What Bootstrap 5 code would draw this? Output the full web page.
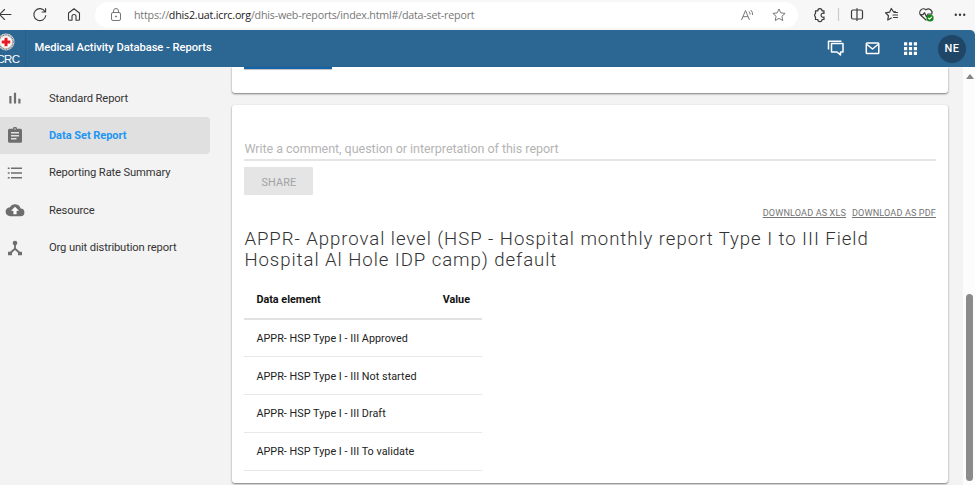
<!DOCTYPE html>
<html lang="en">
<head>
<meta charset="utf-8">
<meta name="viewport" content="width=device-width, initial-scale=1">
<title>Medical Activity Database - Reports</title>
<link href="https://cdn.jsdelivr.net/npm/bootstrap@5.3.0/dist/css/bootstrap.min.css" rel="stylesheet">
<style>
body{font-family:Roboto,sans-serif;font-size:11px;line-height:16px;color:#333;background:#f3f3f3;height:485px}
svg{display:block;flex:none}
.browser-bar{height:30px;background:#f7f7f7;color:#3b3b3b}
.nav-icons{width:95px;padding-left:0}
.address{width:703px;height:26px;margin-top:2px;background:#fff;border-radius:13px;padding:0 12px 0 15px;color:#777}
.url{font:10.7px/16px "Open Sans",sans-serif;color:#777;margin-left:12px;white-space:nowrap;letter-spacing:-.2px}
.url b{font-weight:400;color:#222}
.app-header{height:37px;background:#2c6693;color:#fff;border-radius:0 5px 0 0}
.brand{width:26px;height:37px}
.app-title{font-weight:500;font-size:11.2px;margin-left:8.5px;margin-bottom:2px;letter-spacing:-.04px}
.avatar{width:28px;height:28px;background:#1f4666;font-size:11px;font-weight:500;letter-spacing:.4px;margin-right:9px}
.workspace{height:418px}
.side{width:210px;padding-top:12.4px}
.side .side-link{height:37.4px;padding-left:7px;color:#333;font-size:11.2px;letter-spacing:-.13px;text-decoration:none;border-radius:0 4px 4px 0}
.side-link span{padding-top:1px}
.side-link svg{margin-right:26px;color:#6e6e6e}
.side .side-link.active{background:#e0e0e0;color:#2196f3;font-weight:700;font-size:11px;letter-spacing:-.03px}
.main-col{width:716px;margin-left:22px}
.panel{background:#fff;border-radius:0 0 3px 3px;box-shadow:0 1px 2px rgba(0,0,0,.5)}
.panel-top{height:26px;padding-left:12px}
.blue-edge{width:88px;height:1.5px;background:#1565a8;box-shadow:0 1px 1px rgba(0,0,0,.25)}
.panel-report{height:378px;margin-top:12px;padding:34px 12px 0 12.4px;border-radius:3px}
.comment{width:691.6px;height:22px;border-bottom:2px solid #e5e5e5;color:#b4b4b4;font-size:12.5px;line-height:19px;letter-spacing:-.03px}
.share{width:69px;height:28px;margin-top:6px;background:#e5e5e5;color:#a3a3a3;font-size:10.8px;line-height:29px;letter-spacing:.15px;border-radius:1px;border:0;padding:1px 0 0}
.downloads{height:16px;margin-top:10px;font-size:9.1px;letter-spacing:.13px;gap:6px}
.downloads a{color:#757575;text-underline-offset:1px}
.report-title{font-weight:300;font-size:18.6px;line-height:21px;letter-spacing:.94px;color:#333;margin:8px 0 0}
.data-grid{width:237.6px;margin:9px 0 0;font-size:10.8px;letter-spacing:.03px;color:#222;border-collapse:collapse}
.data-grid th{height:39px;padding:1px 12px 0;font-weight:700;color:#111;border-bottom:2px solid #e2e2e2;vertical-align:middle;font-size:10.8px;letter-spacing:0}
.data-grid td{height:37.8px;padding:2px 12px 0;border-bottom:1px solid #e8e8e8;vertical-align:middle}
.scroll-track{width:12px;background:#fcfcfc;padding:7px 0 4px 1px}
.scroll-thumb{width:7px;height:187px;border-radius:4px;background:#8b8b8b}
</style>
<script src="https://cdn.jsdelivr.net/npm/bootstrap@5.3.0/dist/js/bootstrap.bundle.min.js"></script>
</head>
<body class="overflow-hidden">
<div class="browser-bar d-flex align-items-start">
  <div class="nav-icons flex-shrink-0">
    <svg width="95" height="30" fill="none" stroke="currentColor" stroke-width="1.1" stroke-linecap="round" stroke-linejoin="round">
      <path d="M-2 14.500H11M4.500 9.500L-.5 14.500l5 5"/>
      <path d="M45 11.500a6 6 0 1 0 .8 4M45.600 8.500v3.500h-3.500"/>
      <path d="M68.500 13l5.500-4.300 5.500 4.300v6.200a1 1 0 0 1-1 1H76v-3.700a2 2 0 0 0-4 0v3.700h-2.500a1 1 0 0 1-1-1z"/>
    </svg>
  </div>
  <div class="address d-flex align-items-center flex-shrink-0">
    <svg width="12" height="14" fill="none" stroke="currentColor"><rect x="1.500" y="4.500" width="9" height="8" rx="1.500"/><path d="M3.500 4.500V3a2.500 2.500 0 0 1 5 0v1.500"/><circle cx="6" cy="8.500" r=".6" fill="currentColor"/></svg>
    <span class="url">https://<b>dhis2.uat.icrc.org</b>/dhis-web-reports/index.html#/data-set-report</span>
    <svg class="ms-auto me-3" width="16" height="14" fill="none" stroke="currentColor"><path d="M1.500 12L5.500 2.500 9.500 12M3 8.700h5M9 3.500q1.300 1.300 1 3M10.800 2q2.200 2 1.700 5"/></svg>
    <svg width="14" height="14" fill="none" stroke="currentColor" stroke-linejoin="round"><path d="M7 1l1.800 3.900 4.300.5-3.200 2.900.9 4.200L7 10.400l-3.800 2.100.9-4.200L.9 5.400l4.300-.5z"/></svg>
  </div>
  <svg width="177" height="30" fill="none" stroke="currentColor" stroke-width="1.2" stroke-linejoin="round" stroke-linecap="round">
    <path d="M17.500 10.800h2.300a2.100 2.100 0 0 1 4.200 0h2v2.700a2 2 0 1 0 0 3.500v2.500h-2a2.100 2.100 0 0 1-4.200 0h-2.300v-2.500a2.200 2.200 0 0 1 0-3.500z"/>
    <path d="M40.500 8.500v12" stroke="#ccc"/>
    <path d="M58 10h-3a1.500 1.500 0 0 0-1.500 1.500v6A1.500 1.500 0 0 0 55 19h3M60 10h3a1.500 1.500 0 0 1 1.500 1.500v6A1.500 1.500 0 0 1 63 19h-3M59 8.500v12"/>
    <path d="M97.500 11.800l-2.200-.3L93.300 8.500l-1.700 3.700-4.100.6 3 2.900-.8 4.300 3.600-2M96 12.500h3.500M95 15h4.500M95.500 17.500h4"/>
    <path d="M128 20l-5-4.500a3.700 3.700 0 0 1 5-5.600 3.700 3.700 0 0 1 5.800 4.200M122.300 14.700h2.700l1.500-2 2 4 1.500-2.700h3"/>
    <circle cx="132" cy="18" r="3.600" fill="#14851b" stroke="none"/><path d="M130.500 18.200l1 1 2-2" stroke="#fff"/>
    <g fill="currentColor" stroke="none"><circle cx="157.800" cy="14.800" r="1.200"/><circle cx="162" cy="14.800" r="1.200"/><circle cx="166.200" cy="14.800" r="1.200"/></g>
  </svg>
</div>
<header class="app-header d-flex align-items-center">
  <svg class="brand" viewBox="0 0 26 37"><path d="M25.500 0v37" stroke="#285e89"/><circle cx="6" cy="12" r="8.500" fill="#ddd"/><circle cx="6" cy="12" r="7.200" fill="none" stroke="#777" stroke-width="1.300" stroke-dasharray="1 .7"/><circle cx="6" cy="12" r="5.800" fill="#fff"/><path d="M6 7.700v8.600M1.700 12h8.600" stroke="#e51b23" stroke-width="3"/><text x="-6" y="33.300" font-size="11.500" fill="#fff" font-family="Liberation Sans, sans-serif" textLength="26">ICRC</text></svg>
  <span class="app-title text-nowrap">Medical Activity Database - Reports</span>
  <svg class="ms-auto" width="111" height="37" fill="none" stroke="#fff" stroke-width="1.500" stroke-linejoin="round">
    <path d="M1.500 19.500V11.200h13M4.500 13.500H16v8.500h-2.500v3l-3.500-3h-5.500z"/>
    <rect x="39.300" y="13" width="12.500" height="10.500" rx=".8"/><path d="M40 14.500l5.500 4.500 5.500-4.500"/>
    <path fill="#fff" stroke="none" d="M77 12.200h3.200v3.200H77zM81.900 12.200h3.200v3.200h-3.200zM86.800 12.200H90v3.200h-3.200zM77 17h3.200v3.200H77zM81.900 17h3.200v3.200h-3.200zM86.800 17H90v3.200h-3.200zM77 21.800h3.200V25H77zM81.900 21.800h3.200V25h-3.200zM86.800 21.800H90V25h-3.200z"/>
  </svg>
  <div class="avatar rounded-circle d-flex align-items-center justify-content-center text-white">NE</div>
</header>
<div class="workspace d-flex">
  <nav class="side flex-shrink-0">
    <a class="side-link d-flex align-items-center" href="#"><svg width="16" height="16" fill="currentColor"><path d="M2.300 6h2.200v7.500H2.300zM6.900 2.800h2.200v10.700H6.900zM11.300 8.800h2.200v4.700h-2.200z"/></svg><span>Standard Report</span></a>
    <a class="side-link active d-flex align-items-center" href="#"><svg width="16" height="17" viewBox="0 0 16 17"><path fill="currentColor" d="M2.500 1.700H6a2 2 0 0 1 4 0h3.500A1.500 1.500 0 0 1 15 3.200v11a1.500 1.500 0 0 1-1.500 1.500h-11A1.500 1.500 0 0 1 1 14.200v-11a1.500 1.500 0 0 1 1.500-1.500z"/><circle cx="8" cy="2" r=".7" fill="#e0e0e0"/><path d="M4 5.800h8M4 8.800h8M4 11.800h5.500" stroke="#e0e0e0" stroke-width="1.400"/></svg><span>Data Set Report</span></a>
    <a class="side-link d-flex align-items-center" href="#"><svg width="16" height="16" fill="none" stroke="currentColor" stroke-width="1.400"><path d="M4 3.300h11M4 8h11M4 12.700h11M.8 3.300h1.800M.8 8h1.800M.8 12.700h1.800"/></svg><span>Reporting Rate Summary</span></a>
    <a class="side-link d-flex align-items-center" href="#"><svg class="overflow-visible" width="16" height="16" viewBox="0 0 16 16"><path fill="currentColor" d="M13.600 6.600A5.900 5.900 0 0 0 2.800 5.200a4.500 4.500 0 0 0 .6 9h10.200a3.800 3.800 0 0 0 0-7.600z"/><path fill="#fff" d="M8 4.800l4 4H9.600v3.400H6.400V8.800H4z"/></svg><span>Resource</span></a>
    <a class="side-link d-flex align-items-center" href="#"><svg width="16" height="16"><g fill="currentColor"><circle cx="8" cy="3" r="2.300"/><path d="M7.100 4h1.800v4.200l4 3.500H15v3.500h-4v-2.400l-3-2.900-3 2.900v2.400H1v-3.500h2.100l4-3.500z"/></g></svg><span>Org unit distribution report</span></a>
  </nav>
  <main class="main-col flex-shrink-0">
    <section class="panel panel-top"><div class="blue-edge"></div></section>
    <section class="panel panel-report">
      <div class="comment">Write a comment, question or interpretation of this report</div>
      <button class="share d-block" type="button" disabled>SHARE</button>
      <div class="downloads d-flex justify-content-end align-items-center"><a href="#">DOWNLOAD AS XLS</a><a href="#">DOWNLOAD AS PDF</a></div>
      <h1 class="report-title text-nowrap">APPR- Approval level (HSP - Hospital monthly report Type I to III Field<br>Hospital Al Hole IDP camp) default</h1>
      <table class="data-grid">
        <thead><tr><th>Data element</th><th class="text-end">Value</th></tr></thead>
        <tbody>
          <tr><td colspan="2">APPR- HSP Type I - III Approved</td></tr>
          <tr><td colspan="2">APPR- HSP Type I - III Not started</td></tr>
          <tr><td colspan="2">APPR- HSP Type I - III Draft</td></tr>
          <tr><td colspan="2">APPR- HSP Type I - III To validate</td></tr>
        </tbody>
      </table>
    </section>
  </main>
  <div class="scroll-track ms-auto d-flex flex-column align-items-center justify-content-between">
    <svg width="8" height="5"><path d="M4 0l4 5H0z" fill="#858585"/></svg>
    <div class="scroll-thumb"></div>
  </div>
</div>
</body>
</html>
